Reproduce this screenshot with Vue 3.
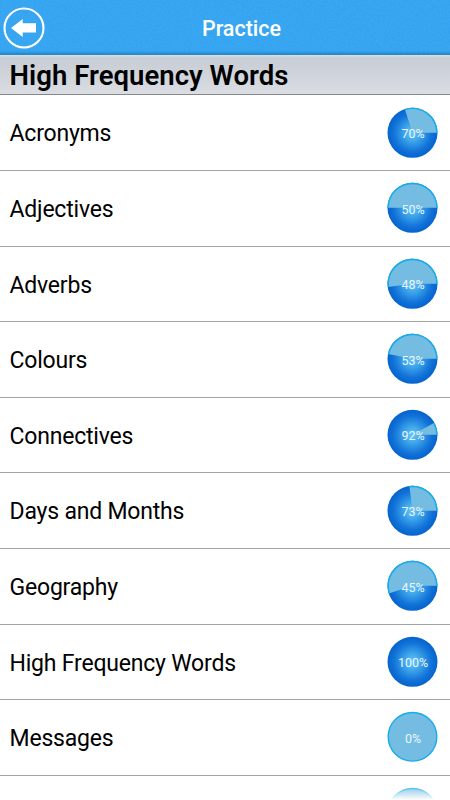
<script setup>
const topics = [
  { name: 'Acronyms', score: 70 },
  { name: 'Adjectives', score: 50 },
  { name: 'Adverbs', score: 48 },
  { name: 'Colours', score: 53 },
  { name: 'Connectives', score: 92 },
  { name: 'Days and Months', score: 73 },
  { name: 'Geography', score: 45 },
  { name: 'High Frequency Words', score: 100 },
  { name: 'Messages', score: 0 },
  { name: '', score: null },
]

// Light wedge: the share still to be learned, ending at three o'clock.
function remaining(score) {
  const a = (score / 100) * Math.PI * 2
  const x = 25 + 25 * Math.cos(a)
  const y = 25 + 25 * Math.sin(a)
  return `M25 25L${x.toFixed(2)} ${y.toFixed(2)}A25 25 0 ${score < 50 ? 1 : 0} 1 50 25Z`
}
function rim(score) {
  const a = (score / 100) * Math.PI * 2
  const x = 25 + 24.3 * Math.cos(a)
  const y = 25 + 24.3 * Math.sin(a)
  return `M${x.toFixed(2)} ${y.toFixed(2)}A24.3 24.3 0 ${score < 50 ? 1 : 0} 1 49.3 25`
}
</script>

<template>
  <div class="screen">
    <header class="bar">
      <svg class="grain" width="450" height="55" aria-hidden="true">
        <filter id="noise" x="0" y="0" width="100%" height="100%">
          <feTurbulence type="fractalNoise" baseFrequency="0.55" numOctaves="2" />
          <feColorMatrix values="0 0 0 0 0  0 0 0 0 0.25  0 0 0 0 0.6  0.7 0 0 0 -0.26" />
        </filter>
        <rect width="450" height="55" filter="url(#noise)" />
      </svg>
      <div class="side">
        <svg class="back" width="42" height="42" viewBox="0 0 42 42">
          <circle cx="21" cy="21" r="19.5" fill="none" stroke="#fff" stroke-width="2.1" />
          <path d="M8 20.9L19.7 12V16.3H33V25.6H19.7V29.9Z" fill="#fff" />
        </svg>
      </div>
      <h1 class="title">Practice</h1>
      <div class="side"></div>
    </header>
    <h2 class="section">High Frequency Words</h2>
    <ul class="list">
      <li v-for="(t, i) in topics" :key="i" class="row">
        <span class="name">{{ t.name }}</span>
        <span class="pie">
          <svg class="disc" width="50" height="50" viewBox="0.5 0.2 50 50">
            <defs>
              <radialGradient :id="'g' + i">
                <stop offset="0" stop-color="#66c8f8" />
                <stop offset="0.35" stop-color="#3da3ea" />
                <stop offset="0.75" stop-color="#1273d8" />
                <stop offset="1" stop-color="#0563ce" />
              </radialGradient>
            </defs>
            <template v-if="!t.score">
              <circle cx="25" cy="25" r="24.3" fill="#75bce2" stroke="#14adeb" stroke-width="1.4" />
            </template>
            <template v-else>
              <circle cx="25" cy="25" r="25" :fill="`url(#g${i})`" />
              <template v-if="t.score < 100">
                <path :d="remaining(t.score)" fill="#75bce2" />
                <path :d="rim(t.score)" fill="none" stroke="#14adeb" stroke-width="1.4" />
              </template>
            </template>
          </svg>
          <span v-if="t.score !== null" class="pct">{{ t.score }}%</span>
        </span>
      </li>
    </ul>
    <div class="fade"></div>
  </div>
</template>

<style>
body {
  background: #fff;
}
</style>

<style scoped>
.screen {
  position: relative;
  width: 450px;
  height: 800px;
  overflow: hidden;
  background: #fff;
  font-family: Roboto, sans-serif;
  color: #000;
}
.bar {
  position: relative;
  box-sizing: border-box;
  height: 55px;
  display: flex;
  align-items: center;
  justify-content: space-between;
  background: linear-gradient(#3aa7f3 0, #3aa7f3 50px, #369fe8 52px, #2088ca 54px, #2593cf 55px);
}
.grain {
  position: absolute;
  inset: 0;
  opacity: 0.45;
}
.side {
  position: relative;
  width: 60px;
  height: 55px;
  padding-left: 3px;
  display: flex;
  align-items: center;
  box-sizing: border-box;
}
.back {
  display: block;
}
.title {
  position: relative;
  margin: 0;
  padding: 2px 0 0 33px;
  width: 330px;
  box-sizing: border-box;
  text-align: center;
  font-size: 21.5px;
  line-height: 28px;
  font-weight: 500;
  color: #fff;
}
.section {
  box-sizing: border-box;
  height: 40px;
  margin: 0;
  padding: 3px 9.5px 0;
  font-size: 27.5px;
  line-height: 36px;
  font-weight: 600;
  letter-spacing: 0.04px;
  background: linear-gradient(#e0dcda 0, #c7cdd5 3px, #dadde2 100%);
  border-bottom: 1px solid #85888e;
}
.list {
  list-style: none;
  margin: 0;
  padding: 0.3px 0 0;
}
.row {
  box-sizing: border-box;
  height: 75.62px;
  padding: 0 12px 0 9.5px;
  display: flex;
  align-items: center;
  justify-content: space-between;
  border-bottom: 1px solid #a3a3a3;
}
.name {
  font-size: 23px;
  line-height: 30px;
  padding-top: 3.4px;
  letter-spacing: -0.2px;
}
.pie {
  display: grid;
  place-items: center;
  width: 50px;
  height: 50px;
}
.pie > * {
  grid-area: 1 / 1;
}
.disc {
  overflow: visible;
}
.pct {
  position: relative;
  padding-top: 2.6px;
  font-size: 12.5px;
  line-height: 16px;
  color: #e9f6ff;
}
.fade {
  position: absolute;
  left: 0;
  right: 0;
  bottom: 0;
  height: 16px;
  background: linear-gradient(rgba(255, 255, 255, 0), #fff);
}
</style>
